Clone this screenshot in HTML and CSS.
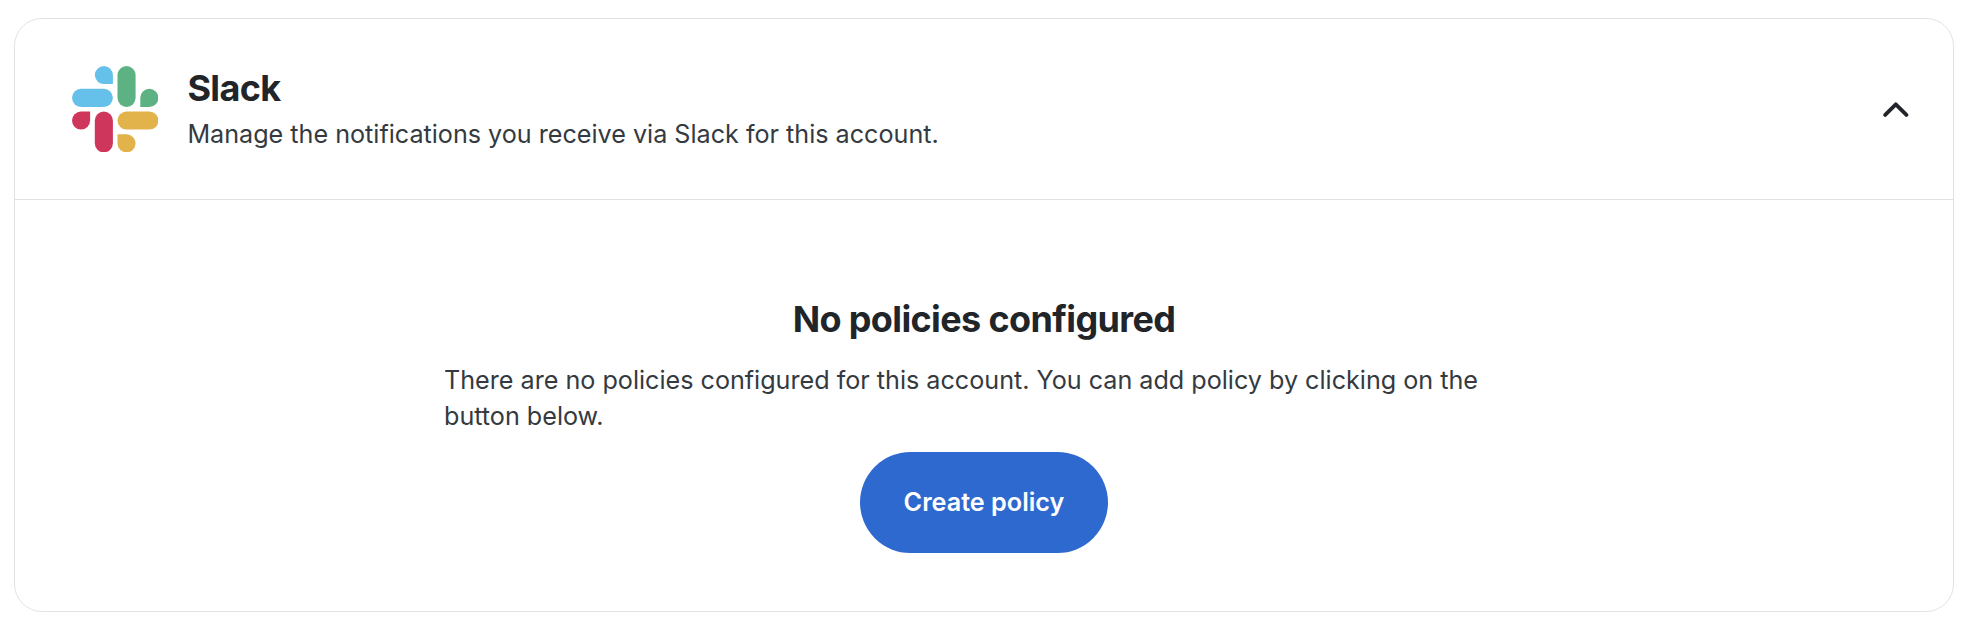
FILE: index.html
```html
<!DOCTYPE html>
<html lang="en">
<head>
<meta charset="utf-8">
<title>Slack notifications</title>
<link rel="stylesheet" href="styles.css">
</head>
<body>
<section class="card">
  <header class="card-header">
    <svg class="logo" viewBox="0 0 86.4 86.4" aria-hidden="true">
      <g fill="#65c1ea"><path d="M31.9 0a9 9 0 0 1 9 9v9.1h-9a9.05 9.05 0 0 1 0-18.1z"/><rect x="0" y="22.8" width="40.9" height="18.1" rx="9.05"/></g>
      <g fill="#5db283"><rect x="45.5" y="0" width="18.1" height="40.9" rx="9.05"/><path d="M68.3 40.9v-9a9.05 9.05 0 1 1 9.1 9z"/></g>
      <g fill="#cf365c"><path d="M18.1 45.5v9.1a9.05 9.05 0 1 1-9.1-9.1z"/><rect x="22.8" y="45.5" width="18.1" height="40.9" rx="9.05"/></g>
      <g fill="#e2b34a"><rect x="45.5" y="45.5" width="40.9" height="18.1" rx="9.05"/><path d="M45.5 68.3h9a9.05 9.05 0 1 1-9 9.1z"/></g>
    </svg>
    <div class="heading">
      <h2 class="title">Slack</h2>
      <p class="text">Manage the notifications you receive via Slack for this account.</p>
    </div>
    <button class="toggle" aria-label="Collapse">
      <svg class="chevron" viewBox="0 0 26 16" aria-hidden="true"><path d="M2.2 12.9 12.8 2.3 23.4 12.9"/></svg>
    </button>
  </header>
  <div class="empty">
    <h2 class="title">No policies configured</h2>
    <p class="text empty-text">There are no policies configured for this account. You can add policy by clicking on the button below.</p>
    <button class="create">Create policy</button>
  </div>
</section>
</body>
</html>
```
FILE: styles.css
```css
* { box-sizing: border-box; }
body {
  margin: 0;
  padding: 18px 16px 20px 14px;
  background: #fff;
  font-family: Inter, "Liberation Sans", sans-serif;
}
.card {
  height: 594px;
  border: 1px solid #e1e2e3;
  border-radius: 28px;
}
.card-header {
  display: flex;
  align-items: center;
  height: 181px;
  padding: 0 44px 0 57px;
  border-bottom: 1px solid #e1e2e3;
}
.logo { width: 86.4px; height: 86.4px; flex: none; }
.heading { margin-left: 29px; flex: 1; }
.title {
  margin: 0;
  color: #212529;
  font-size: 36px;
  font-weight: 700;
  line-height: 44px;
  letter-spacing: -0.63px;
}
.text {
  margin: 6px 0 0;
  color: #343a40;
  font-size: 25.15px;
  line-height: 36px;
}
.toggle {
  display: flex;
  padding: 2px 0 0;
  border: 0;
  background: none;
}
.chevron {
  width: 26px;
  height: 16px;
  fill: none;
  stroke: #212529;
  stroke-width: 3.8;
  stroke-linecap: round;
  stroke-linejoin: round;
}
.empty {
  display: flex;
  flex-direction: column;
  align-items: center;
  padding-top: 97px;
}
.empty-text { width: 1080px; margin-top: 21px; }
.create {
  width: 248px;
  height: 101px;
  margin-top: 18px;
  padding: 0 0 1px;
  border: 0;
  border-radius: 51px;
  background: #2e69cf;
  color: #fff;
  font: 600 25.2px/36px Inter, "Liberation Sans", sans-serif;
}
```
